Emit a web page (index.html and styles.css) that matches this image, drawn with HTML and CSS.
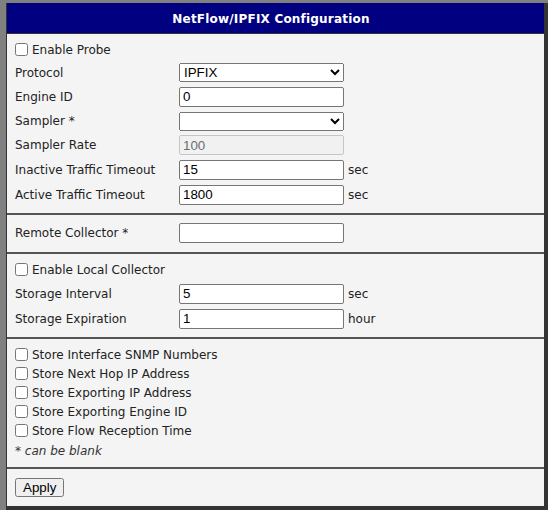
FILE: index.html
```html
<!DOCTYPE html>
<html>
<head>
<meta charset="utf-8">
<link rel="stylesheet" href="styles.css">
</head>
<body>
<div class="frame">
  <div class="panel">
    <div class="header">NetFlow/IPFIX Configuration</div>

    <div class="section s-probe">
      <div class="row h23"><label class="check"><input type="checkbox"><span>Enable Probe</span></label></div>
      <div class="row h23"><span class="label">Protocol</span><select class="field"><option>IPFIX</option></select></div>
      <div class="row h25"><span class="label">Engine ID</span><input class="field" type="text" value="0"></div>
      <div class="row h24"><span class="label">Sampler *</span><select class="field"><option></option></select></div>
      <div class="row h24"><span class="label">Sampler Rate</span><input class="field" type="text" value="100" disabled></div>
      <div class="row h25"><span class="label">Inactive Traffic Timeout</span><input class="field" type="text" value="15"><span class="unit">sec</span></div>
      <div class="row h25"><span class="label">Active Traffic Timeout</span><input class="field" type="text" value="1800"><span class="unit">sec</span></div>
    </div>

    <div class="section s-remote">
      <div class="row h24"><span class="label">Remote Collector *</span><input class="field" type="text" value=""></div>
    </div>

    <div class="section s-local">
      <div class="row h23"><label class="check"><input type="checkbox"><span>Enable Local Collector</span></label></div>
      <div class="row h25"><span class="label">Storage Interval</span><input class="field" type="text" value="5"><span class="unit">sec</span></div>
      <div class="row h25"><span class="label">Storage Expiration</span><input class="field" type="text" value="1"><span class="unit">hour</span></div>
    </div>

    <div class="section s-store">
      <div class="row h19"><label class="check"><input type="checkbox"><span>Store Interface SNMP Numbers</span></label></div>
      <div class="row h19"><label class="check"><input type="checkbox"><span>Store Next Hop IP Address</span></label></div>
      <div class="row h19"><label class="check"><input type="checkbox"><span>Store Exporting IP Address</span></label></div>
      <div class="row h19"><label class="check"><input type="checkbox"><span>Store Exporting Engine ID</span></label></div>
      <div class="row h19"><label class="check"><input type="checkbox"><span>Store Flow Reception Time</span></label></div>
      <div class="row h22"><span class="note">* can be blank</span></div>
    </div>

    <div class="section s-apply">
      <div class="row h24"><button class="apply" type="button">Apply</button></div>
    </div>
  </div>
</div>
</body>
</html>
```

FILE: styles.css
```css
html, body {
  margin: 0;
  padding: 0;
  background: #ffffff;
}

body {
  font-family: "DejaVu Sans", Verdana, sans-serif;
  font-size: 12px;
  color: #222222;
}

.frame {
  width: 548px;
  box-sizing: border-box;
  border-top: 3px solid #808080;
  border-left: 6px solid #808080;
}

.panel {
  background: #f4f4f4;
  border-left: 1px solid #333333;
  border-right: 4px solid #333333;
  border-bottom: 4px solid #333333;
}

.header {
  height: 27px;
  padding-top: 3px;
  padding-right: 9px;
  line-height: 27px;
  background: #000080;
  color: #ffffff;
  font-weight: bold;
  font-size: 12px;
  letter-spacing: 0.2px;
  text-align: center;
  border-bottom: 1px solid #333333;
}

.section {
  padding-left: 8px;
  padding-right: 8px;
}

.section + .section {
  border-top: 2px solid #555555;
}

.s-probe { padding-top: 4px; padding-bottom: 6px; }
.s-remote { padding-top: 6px; padding-bottom: 7px; }
.s-local { padding-top: 4px; padding-bottom: 6px; }
.s-store { padding-top: 6px; padding-bottom: 5px; }
.s-apply { padding-top: 6px; padding-bottom: 7px; }

.row {
  display: flex;
  align-items: center;
}

.h19 { height: 19px; }
.h22 { height: 22px; }
.h23 { height: 23px; }
.h24 { height: 24px; }
.h25 { height: 25px; }

.label {
  width: 164px;
  flex: none;
}

.check {
  display: flex;
  align-items: center;
}

.check input {
  width: 13px;
  height: 13px;
  margin: 0 4px 0 0;
}

.field {
  width: 165px;
  height: 20px;
  box-sizing: border-box;
  margin: 0;
  font-family: "Liberation Sans", Arial, sans-serif;
  font-size: 13.333px;
}

input.field {
  border: 1px solid #767676;
  border-radius: 2px;
  padding: 1px 3px;
  background: #ffffff;
  color: #000000;
}

input.field:disabled {
  background: #f1f1f1;
  border-color: #c6c6c6;
  color: #6d6d6d;
}

select.field {
  height: 19px;
}

.unit {
  margin-left: 4px;
}

.note {
  font-style: italic;
  color: #333333;
}

.apply {
  margin: 0;
  height: 19px;
  padding: 0 6px;
  font-family: "Liberation Sans", Arial, sans-serif;
  font-size: 13.333px;
}
```
